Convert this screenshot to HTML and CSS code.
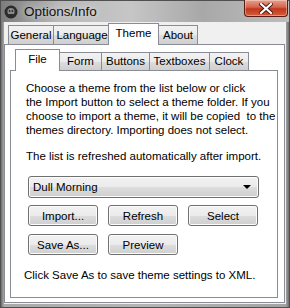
FILE: index.html
```html
<!DOCTYPE html>
<html lang="en">
<head>
    <meta charset="UTF-8">
    <meta name="viewport" content="width=device-width, initial-scale=1.0">
    <title>Options/Info</title>
    <link rel="stylesheet" href="styles.css">
</head>
<body>
    <div class="window">
        <div class="titlebar">
            <svg class="app-icon" width="14" height="14" viewBox="0 0 14 14">
                <circle cx="7" cy="7" r="6.5" fill="#2b2b2b"/>
                <circle cx="7" cy="6.5" r="3.6" fill="#8a8a8a"/>
                <rect x="4.5" y="9" width="5" height="3" fill="#2b2b2b"/>
                <circle cx="5.6" cy="6" r="0.9" fill="#2b2b2b"/>
                <circle cx="8.4" cy="6" r="0.9" fill="#2b2b2b"/>
            </svg>
            <span class="title">Options/Info</span>
            <div class="close-btn">
                <svg width="14" height="11" viewBox="0 0 14 11">
                    <path d="M2 1 L12 10 M12 1 L2 10" stroke="#3c1a14" stroke-width="4" stroke-linecap="square"/>
                    <path d="M2 1 L12 10 M12 1 L2 10" stroke="#ffffff" stroke-width="2.2" stroke-linecap="square"/>
                </svg>
            </div>
        </div>

        <div class="client">
            <div class="tab-row outer-row">
                <span class="tab tab-general">General</span>
                <span class="tab tab-language">Language</span>
                <span class="tab active tab-theme">Theme</span>
                <span class="tab tab-about">About</span>
            </div>
            <div class="tab-panel outer-panel">
                <div class="tab-row inner-row">
                    <span class="tab active tab-file">File</span>
                    <span class="tab tab-form">Form</span>
                    <span class="tab tab-buttons">Buttons</span>
                    <span class="tab tab-textboxes">Textboxes</span>
                    <span class="tab tab-clock">Clock</span>
                </div>
                <div class="tab-panel inner-panel">
                    <p class="intro">Choose a theme from the list below or click<br>the Import button to select a theme folder. If you<br>choose to import a theme, it will be copied &nbsp;to the<br>themes directory. Importing does not select.</p>
                    <p class="note">The list is refreshed automatically after import.</p>

                    <div class="combo">
                        <span>Dull Morning</span>
                        <span class="arrow"></span>
                    </div>

                    <div class="btn-row">
                        <button>Import...</button>
                        <button>Refresh</button>
                        <button>Select</button>
                    </div>
                    <div class="btn-row">
                        <button>Save As...</button>
                        <button>Preview</button>
                    </div>

                    <p class="footer">Click Save As to save theme settings to XML.</p>
                </div>
            </div>
        </div>
    </div>
</body>
</html>
```

FILE: styles.css
```css
html, body {
    margin: 0;
    padding: 0;
}
body {
    width: 290px;
    height: 308px;
    overflow: hidden;
    font-family: "Liberation Sans", Arial, sans-serif;
    font-size: 11.5px;
    color: #000;
}
.window {
    width: 290px;
    height: 308px;
    box-sizing: border-box;
    background: linear-gradient(90deg, #6e6e6e 0, #a9a9a9 3px, #b4b4b4 50%, #a3a3a3 calc(100% - 3px), #6e6e6e 100%);
    border: 1px solid #505050;
    display: flex;
    flex-direction: column;
}
.titlebar {
    height: 21px;
    display: flex;
    align-items: center;
    position: relative;
    background: linear-gradient(90deg, #7c7c7c 0, #b9b9b9 20%, #c6c6c6 45%, #a8a8a8 70%, #bdbdbd 100%);
}
.app-icon {
    margin-left: 3px;
}
.title {
    margin-left: 6px;
    font-size: 13.5px;
    color: #111;
    text-shadow: 0 0 6px rgba(255, 255, 255, 0.8);
}
.close-btn {
    position: absolute;
    right: 1px;
    top: -1px;
    width: 44px;
    height: 17px;
    box-sizing: border-box;
    border: 1px solid #5a1b12;
    border-top: none;
    border-radius: 0 0 4px 4px;
    background: linear-gradient(#e8a08e 0, #d4644c 45%, #c0361c 55%, #d25f3c 100%);
    box-shadow: inset 0 0 0 1px rgba(255, 255, 255, 0.35);
    display: flex;
    justify-content: center;
    align-items: center;
}
.client {
    flex: 1;
    margin: 0 3px 3px 3px;
    background: #f0f0f0;
    display: flex;
    flex-direction: column;
    padding: 1px 1px 1px 0;
}

/* tabs */
.tab-row {
    display: flex;
    align-items: flex-end;
    position: relative;
    z-index: 1;
}
.outer-row {
    height: 21px;
    padding-left: 4px;
}
.inner-row {
    height: 21px;
    padding-left: 7px;
}
.tab {
    height: 19px;
    box-sizing: border-box;
    border: 1px solid #898c95;
    border-bottom: none;
    margin-right: -1px;
    background: linear-gradient(#f2f2f2 0, #ebebeb 50%, #dddddd 51%, #cfcfcf 100%);
    text-align: center;
    line-height: 18px;
    font-size: 11.5px;
    white-space: nowrap;
}
.inner-row .tab {
    height: 18px;
    line-height: 17px;
}
.tab.active {
    height: 22px;
    margin: 0 -1px -1px -2px;
    background: #fff;
    line-height: 19px;
    position: relative;
    z-index: 2;
}
.inner-row .tab.active {
    height: 22px;
    line-height: 19px;
}
.tab-general { width: 46px; }
.tab-language { width: 58px; }
.tab-theme { width: 51px; }
.tab-about { width: 40px; }
.tab-file { width: 45px; }
.tab-form { width: 43px; }
.tab-buttons { width: 49px; }
.tab-textboxes { width: 61px; }
.tab-clock { width: 40px; }

.tab-panel {
    border: 1px solid #898c95;
    background: #fff;
}
.outer-panel {
    flex: 1;
    display: flex;
    flex-direction: column;
    padding: 4px 6px 4px 5px;
}
.inner-panel {
    flex: 1;
    padding: 0 10px 0 15px;
}

/* panel content */
p {
    margin: 0;
    line-height: 14px;
    white-space: nowrap;
}
.intro {
    margin-top: 10px;
}
.note {
    margin-top: 12px;
}
.combo {
    margin: 13px 0 0 2px;
    width: 231px;
    height: 22px;
    box-sizing: border-box;
    border: 1px solid #707070;
    border-radius: 3px;
    background: linear-gradient(#f2f2f2 0, #ebebeb 50%, #dddddd 51%, #cfcfcf 100%);
    box-shadow: inset 0 0 0 1px #fcfcfc;
    display: flex;
    align-items: center;
    justify-content: space-between;
    padding: 0 7px 0 4px;
}
.arrow {
    width: 0;
    height: 0;
    border-left: 4px solid transparent;
    border-right: 4px solid transparent;
    border-top: 4px solid #000;
}
.btn-row {
    display: flex;
    gap: 10px;
    margin: 7px 0 0 2px;
}
.btn-row + .btn-row {
    margin-top: 8px;
}
button {
    width: 70px;
    height: 21px;
    padding: 0;
    font-family: "Liberation Sans", Arial, sans-serif;
    font-size: 11.5px;
    color: #000;
    border: 1px solid #707070;
    border-radius: 3px;
    background: linear-gradient(#f2f2f2 0, #ebebeb 50%, #dddddd 51%, #cfcfcf 100%);
    box-shadow: inset 0 0 0 1px #fcfcfc;
}
.footer {
    margin: 13px 0 0 -2px;
}
```
